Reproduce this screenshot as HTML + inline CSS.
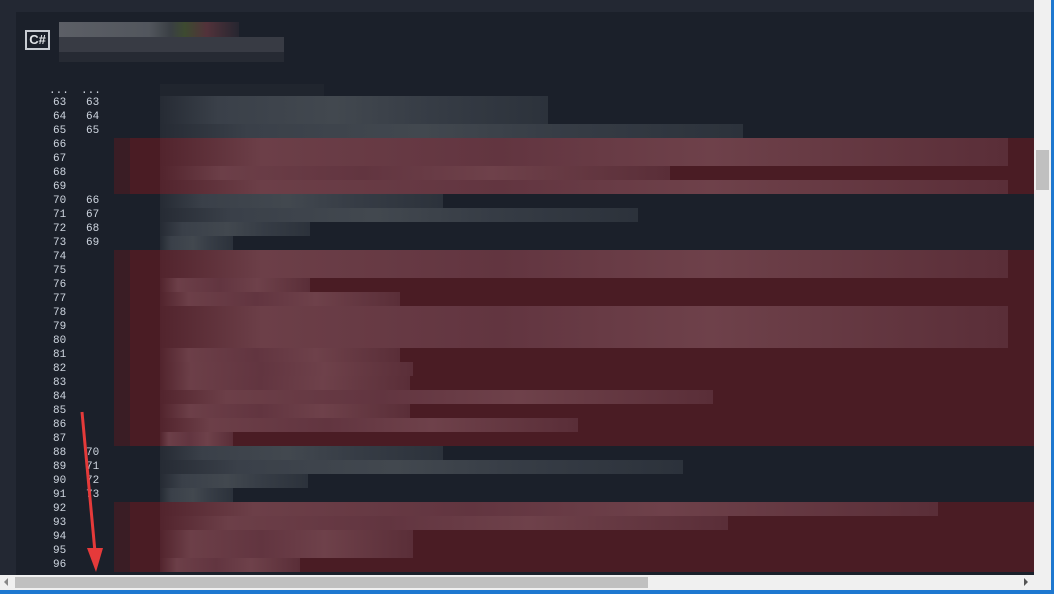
<!DOCTYPE html>
<html><head><meta charset="utf-8"><style>
*{margin:0;padding:0;box-sizing:border-box}
body{width:1054px;height:594px;overflow:hidden;background:#232833;position:relative;font-family:"Liberation Mono",monospace}
.main{position:absolute;left:16px;top:12px;width:1018px;height:563px;background:#1b202a;overflow:hidden}
.r{position:absolute;left:0;width:1018px;height:14px}
.red{background:linear-gradient(90deg,transparent 98px,#3a1d25 98px,#3a1d25 114px,#4a1c24 114px)}
.n{position:absolute;font:11px "Liberation Mono",monospace;color:#cfd6e0;top:0;line-height:14px}
.b{position:absolute;left:144px;height:14px;top:0}
.g .b{background:linear-gradient(90deg,#262b34 0,#3a4049 15%,#42484f 45%,#363c45 70%,#2c323b)}
.red .b{background:linear-gradient(90deg,#52242d 0,#6c3f48 12%,#623540 40%,#6e414a 65%,#5a2e38)}
</style></head><body>
<div class="main">
<div style="position:absolute;left:9px;top:18px;width:25px;height:20px;border:2px solid #c8ccd2;color:#e0e3e6;font:bold 13px 'Liberation Sans',sans-serif;line-height:16px;text-align:center">C#</div>
<div style="position:absolute;left:43px;top:10px;width:180px;height:15px;background:linear-gradient(90deg,#5c5f66,#52565d 50%,#3a3f44 62%,#3d4a30 70%,#52323a 82%,#262630)"></div>
<div style="position:absolute;left:43px;top:25px;width:225px;height:15px;background:#383b44"></div>
<div style="position:absolute;left:43px;top:40px;width:225px;height:10px;background:#262a33"></div>
<div class="n" style="left:33px;top:72px">...</div><div class="n" style="left:65px;top:72px">...</div>
<div style="position:absolute;left:144px;top:72px;width:164px;height:12px;background:#20252e"></div>
<div id="rows"></div>
<svg style="position:absolute;left:0;top:0" width="1018" height="563"><line x1="66" y1="400" x2="79" y2="540" stroke="#e53a3a" stroke-width="3"/><polygon points="71,536 87,536 80,560" fill="#e53a3a"/></svg>
</div>
<div style="position:absolute;left:1034px;top:0;width:17px;height:590px;background:#f0f0f0"></div>
<div style="position:absolute;left:1036px;top:150px;width:13px;height:40px;background:#c0c0c0"></div>
<div style="position:absolute;left:1051px;top:0;width:3px;height:594px;background:#1e78d0"></div>
<div style="position:absolute;left:0;top:575px;width:1034px;height:15px;background:#f0f0f0"></div>
<div style="position:absolute;left:15px;top:577px;width:633px;height:11px;background:#c0c0c0"></div>
<div style="position:absolute;left:4px;top:578px;border:4px solid transparent;border-right-color:#888;border-left:0"></div>
<div style="position:absolute;left:1024px;top:578px;border:4px solid transparent;border-left-color:#555;border-right:0"></div>
<div style="position:absolute;left:0;top:590px;width:1054px;height:4px;background:#1e78d0"></div>
<script>
var d=[[63,63,548],[64,64,548],[65,65,743],[66,0,1008],[67,0,1008],[68,0,670],[69,0,1008],[70,66,443],[71,67,638],[72,68,310],[73,69,233],[74,0,1008],[75,0,1008],[76,0,310],[77,0,400],[78,0,1008],[79,0,1008],[80,0,1008],[81,0,400],[82,0,413],[83,0,410],[84,0,713],[85,0,410],[86,0,578],[87,0,233],[88,70,443],[89,71,683],[90,72,308],[91,73,233],[92,0,938],[93,0,728],[94,0,413],[95,0,413],[96,0,300]];
var h='';d.forEach(function(r){var t=84+14*(r[0]-63);var red=!r[1];
h+='<div class="r '+(red?'red':'g')+'" style="top:'+t+'px"><div class="b" style="width:'+(r[2]-160)+'px"></div><div class="n" style="left:37px">'+r[0]+'</div>'+(r[1]?'<div class="n" style="left:70px">'+r[1]+'</div>':'')+'</div>';});
document.getElementById('rows').innerHTML=h;
</script>
</body></html>
